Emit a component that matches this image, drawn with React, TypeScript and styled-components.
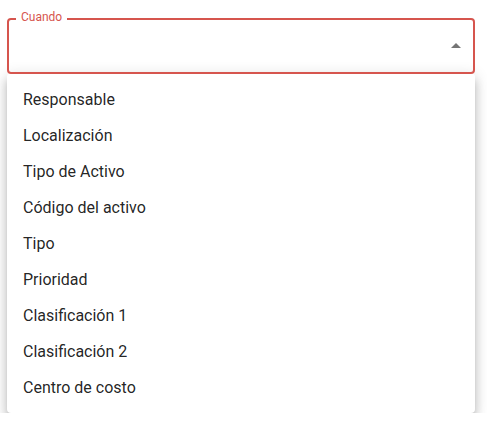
import styled, { createGlobalStyle } from 'styled-components';

const GlobalStyle = createGlobalStyle`
  body {
    margin: 0;
    background: #fff;
    font-family: Roboto, "Liberation Sans", sans-serif;
  }
`;

const options = [
  'Responsable',
  'Localización',
  'Tipo de Activo',
  'Código del activo',
  'Tipo',
  'Prioridad',
  'Clasificación 1',
  'Clasificación 2',
  'Centro de costo',
];

function App() {
  return (
    <Page>
      <GlobalStyle />
      <SelectField>
        <FieldLabel>Cuando</FieldLabel>
        <ArrowIcon viewBox="0 0 24 24">
          <path d="M7 14l5-5 5 5z" />
        </ArrowIcon>
      </SelectField>
      <Menu>
        {options.map((o) => (
          <MenuItem key={o}>{o}</MenuItem>
        ))}
      </Menu>
    </Page>
  );
}

export default App;

const Page = styled.div`
  display: flex;
  flex-direction: column;
  padding: 18px 12px 0 7px;
`;

const SelectField = styled.div`
  position: relative;
  height: 56px;
  box-sizing: border-box;
  border: 2px solid #d6554e;
  border-radius: 4px;
  display: flex;
  align-items: center;
  justify-content: flex-end;
  padding-right: 5px;
`;

const FieldLabel = styled.span`
  position: absolute;
  top: -10px;
  left: 7px;
  padding: 0 5px;
  background: #fff;
  font-size: 12px;
  line-height: 14px;
  color: #d6554e;
`;

const ArrowIcon = styled.svg`
  width: 24px;
  height: 24px;
  fill: rgba(0, 0, 0, 0.54);
`;

const Menu = styled.ul`
  list-style: none;
  margin: -1px 0 0;
  padding: 8px 0;
  background: #fff;
  border-radius: 4px;
  box-shadow: 0px 5px 5px -3px rgba(0, 0, 0, 0.2),
    0px 8px 10px 1px rgba(0, 0, 0, 0.14), 0px 3px 14px 2px rgba(0, 0, 0, 0.12);
`;

const MenuItem = styled.li`
  height: 36px;
  display: flex;
  align-items: center;
  padding: 0 16px;
  font-size: 16px;
  color: rgba(0, 0, 0, 0.87);
`;
